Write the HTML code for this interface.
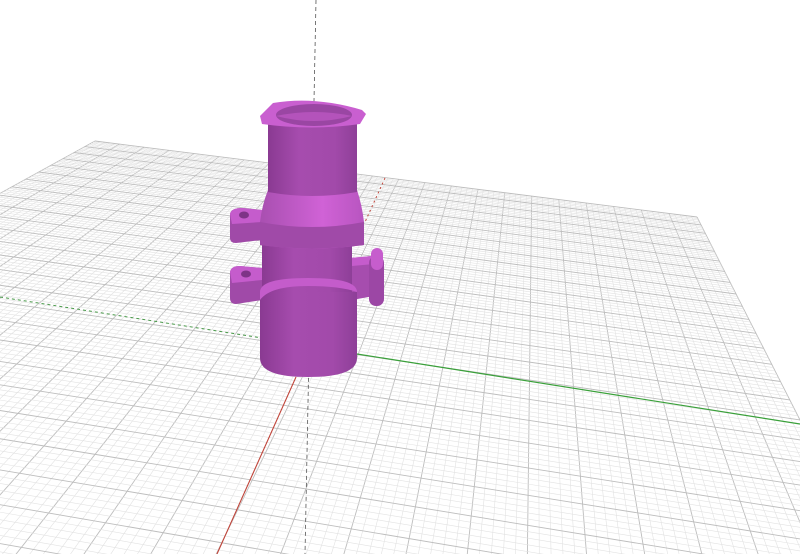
<!DOCTYPE html>
<html><head><meta charset="utf-8"><style>
html,body{margin:0;padding:0;background:#fff;width:800px;height:554px;overflow:hidden}
svg{display:block}
</style></head><body>
<svg id="s" width="800" height="554" viewBox="0 0 800 554" xmlns="http://www.w3.org/2000/svg" style="overflow:hidden">
<defs>
<linearGradient id="cyl" x1="0" x2="1" y1="0" y2="0">
<stop offset="0" stop-color="#8a3a92"/><stop offset="0.35" stop-color="#a64cae"/><stop offset="0.75" stop-color="#a24aaa"/><stop offset="1" stop-color="#8e3f98"/>
</linearGradient>
<linearGradient id="flare" x1="0" x2="1"><stop offset="0" stop-color="#a84fb0"/><stop offset="0.6" stop-color="#d062d6"/><stop offset="1" stop-color="#b855c0"/></linearGradient>
<clipPath id="cp"><rect x="0" y="0" width="800" height="554"/></clipPath>
</defs>
<g id="grid" clip-path="url(#cp)"></g>
<line x1="0" y1="297" x2="262" y2="338" stroke="#4a9a4a" stroke-width="1" stroke-dasharray="3,3"/>
<line x1="357" y1="354" x2="800" y2="424" stroke="#3aa03a" stroke-width="1.2"/>
<line x1="296" y1="377" x2="217" y2="554" stroke="#c0453a" stroke-width="1.1"/>
<line x1="385" y1="178" x2="365" y2="222" stroke="#c0453a" stroke-width="1" stroke-dasharray="2,3"/>
<line x1="316" y1="0" x2="305" y2="554" stroke="#555" stroke-width="0.8" stroke-dasharray="4,3"/>
<g>
<path d="M230 272 Q231 266 240 266 L262 268 L262 300 L236 304 Q230 304 230 298 Z" fill="#a04aa8"/>
<path d="M230 272 Q231 266 240 266 L262 268 L262 280 L232 283 Z" fill="#c55ccc"/>
<ellipse cx="246" cy="274" rx="5" ry="3.5" fill="#7e3487"/>
<path d="M230 214 Q231 208 242 208 L262 210 L262 240 L236 243 Q230 243 230 238 Z" fill="#a04aa8"/>
<path d="M230 214 Q231 208 242 208 L262 210 L262 222 L232 224 Z" fill="#c55ccc"/>
<ellipse cx="244" cy="215" rx="5" ry="3.5" fill="#7e3487"/>
<path d="M350 258 L372 256 L374 296 L352 300 Z" fill="#a64dae"/>
<path d="M350 258 L372 256 L374 264 L352 266 Z" fill="#c55ccc"/>
<rect x="369" y="256" width="15" height="50" rx="7" fill="#9c47a5"/>
<rect x="371" y="248" width="12" height="22" rx="6" fill="#c65dcd"/>
<rect x="262" y="235" width="90" height="60" fill="url(#cyl)"/>
<path d="M260 292 L357 292 L357 358 Q357 377 308 377 Q260 377 260 358 Z" fill="url(#cyl)"/>
<path d="M260 292 Q260 278 308 278 Q357 278 357 292 Q340 286 308 286 Q270 286 260 300 Z" fill="#c45ccb"/>
<path d="M268 190 L357 190 Q362 205 364 222 L364 245 Q312 252 260 245 L260 222 Q262 205 268 190 Z" fill="url(#flare)"/>
<path d="M260 222 Q312 232 364 222 L364 245 Q312 252 260 245 Z" fill="#a04aa8"/>
<path d="M268 122 L357 122 L357 192 Q312 200 268 192 Z" fill="url(#cyl)"/>
<path d="M260 116 L273 103 Q315 96 362 110 L366 114 L360 124 Q312 131 262 124 Z" fill="#c95fd0"/>
<ellipse cx="314" cy="115" rx="38" ry="11" fill="#9a46a3"/>
<path d="M276 116 Q314 108 352 116 Q314 126 276 116Z" fill="#b453bb"/>
</g>
</svg>
<script>
(function(){
var P=[[95,141],[697,217],[1006,826],[-600,524]];
var x0=P[0][0],y0=P[0][1],x1=P[1][0],y1=P[1][1],x2=P[2][0],y2=P[2][1],x3=P[3][0],y3=P[3][1];
var dx1=x1-x2,dx2=x3-x2,dy1=y1-y2,dy2=y3-y2,sx=x0-x1+x2-x3,sy=y0-y1+y2-y3;
var den=dx1*dy2-dx2*dy1;
var g=(sx*dy2-dx2*sy)/den,h=(dx1*sy-sx*dy1)/den;
var a=x1-x0+g*x1,b=x3-x0+h*x3,c=x0,d=y1-y0+g*y1,e=y3-y0+h*y3,f=y0;
function m(u,v){var w=g*u+h*v+1;return [(a*u+b*v+c)/w,(d*u+e*v+f)/w];}
var NU=23,NV=27,sub=5,out='';
function ln(p,q,col,wd){out+='<line x1="'+p[0].toFixed(1)+'" y1="'+p[1].toFixed(1)+'" x2="'+q[0].toFixed(1)+'" y2="'+q[1].toFixed(1)+'" stroke="'+col+'" stroke-width="'+wd+'"/>';}
for(var i=0;i<=NU*sub;i++){var u=i/(NU*sub);var maj=i%sub==0;ln(m(u,0),m(u,1),maj?'#bdbdbd':'#e2e2e2',maj?0.9:0.6);}
for(var j=0;j<=NV*sub;j++){var v=j/(NV*sub);var maj=j%sub==0;ln(m(0,v),m(1,v),maj?'#bdbdbd':'#e2e2e2',maj?0.9:0.6);}
document.getElementById('grid').innerHTML=out;
})();
</script>
</body></html>
